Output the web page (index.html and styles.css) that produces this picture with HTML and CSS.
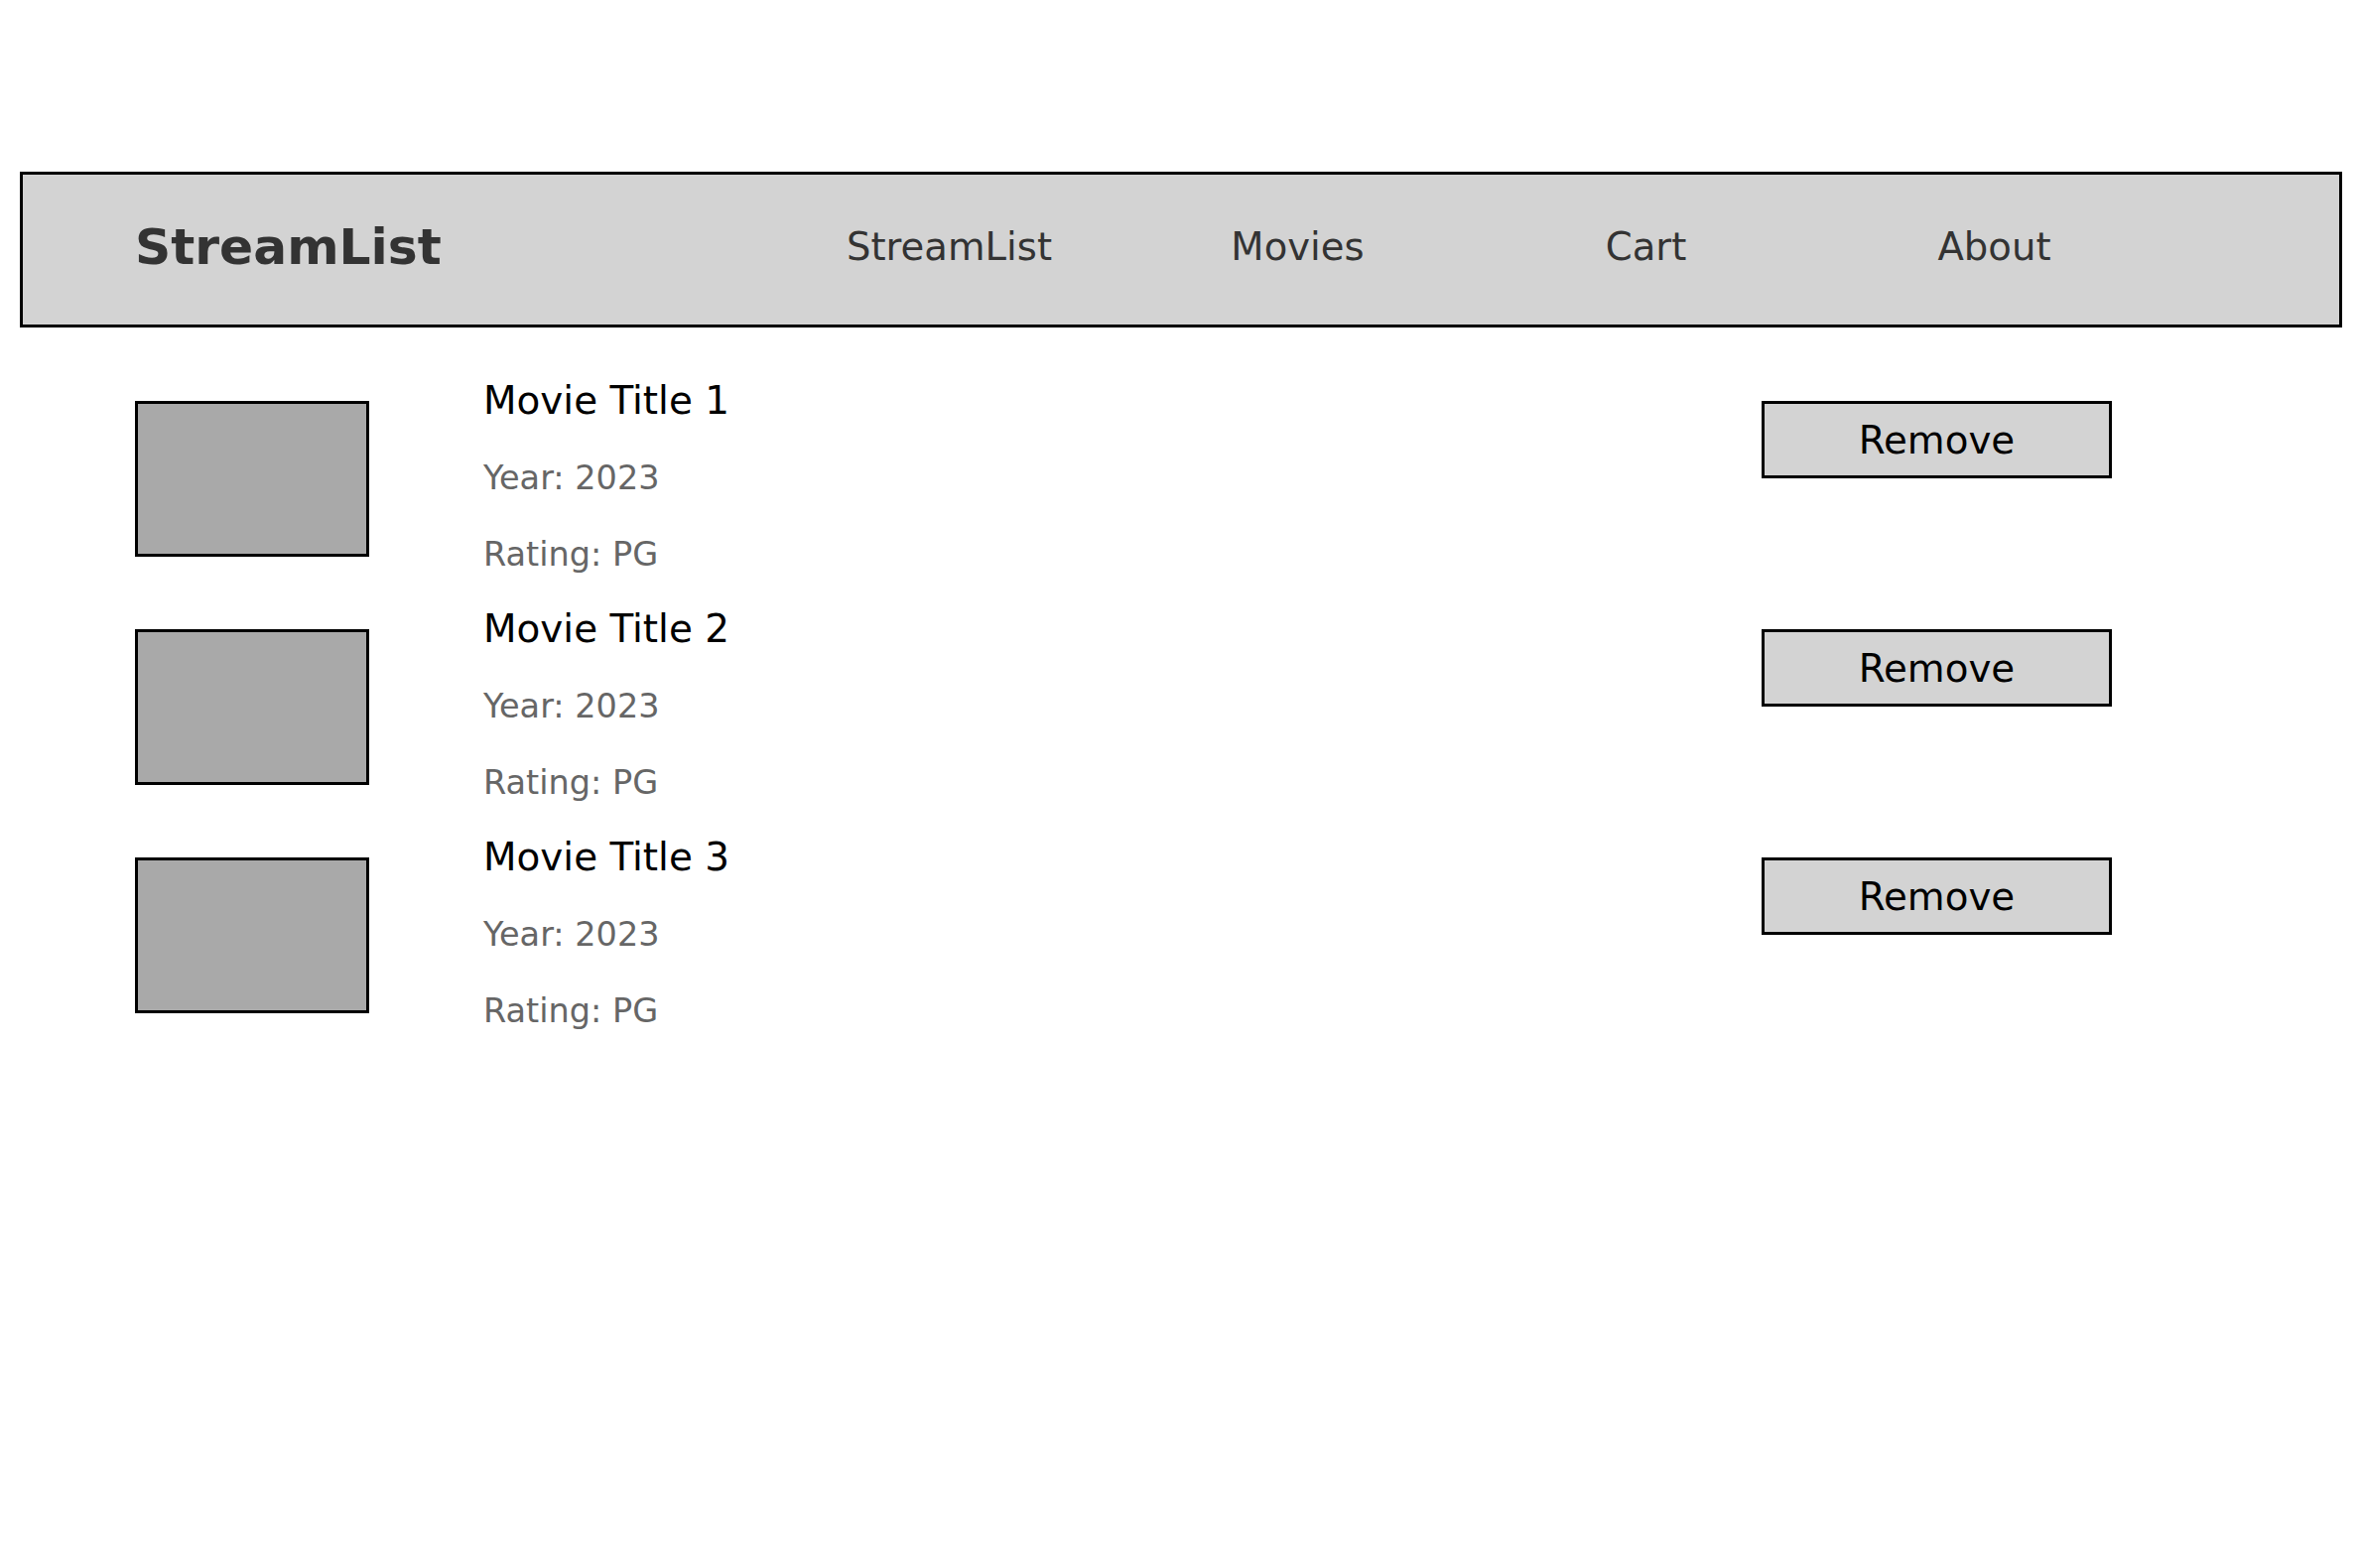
FILE: index.html
```html
<!DOCTYPE html>
<html lang="en">
<head>
<meta charset="utf-8">
<title>StreamList</title>
<link rel="stylesheet" href="styles.css">
</head>
<body>
<div class="page">
  <header class="header">
    <div class="logo">StreamList</div>
    <nav class="nav">
      <a class="nav-link" href="#">StreamList</a>
      <a class="nav-link" href="#">Movies</a>
      <a class="nav-link" href="#">Cart</a>
      <a class="nav-link" href="#">About</a>
    </nav>
  </header>
  <main class="list">
    <div class="item">
      <div class="poster"></div>
      <div class="info">
        <h3 class="title">Movie Title 1</h3>
        <p class="meta meta-year">Year: 2023</p>
        <p class="meta meta-rating">Rating: PG</p>
      </div>
      <button class="remove">Remove</button>
    </div>
    <div class="item">
      <div class="poster"></div>
      <div class="info">
        <h3 class="title">Movie Title 2</h3>
        <p class="meta meta-year">Year: 2023</p>
        <p class="meta meta-rating">Rating: PG</p>
      </div>
      <button class="remove">Remove</button>
    </div>
    <div class="item">
      <div class="poster"></div>
      <div class="info">
        <h3 class="title">Movie Title 3</h3>
        <p class="meta meta-year">Year: 2023</p>
        <p class="meta meta-rating">Rating: PG</p>
      </div>
      <button class="remove">Remove</button>
    </div>
  </main>
</div>
</body>
</html>
```

FILE: styles.css
```css
* {
  box-sizing: border-box;
}

html, body {
  margin: 0;
  padding: 0;
  background: #ffffff;
}

body {
  font-family: "DejaVu Sans", "Liberation Sans", sans-serif;
  color: #000;
}

.page {
  padding: 173px 19px 0 20px;
}

.header {
  display: flex;
  align-items: center;
  height: 157px;
  border: 3px solid #000;
  background: #d3d3d3;
  padding-left: 113px;
  padding-bottom: 5px;
}

.logo {
  font-weight: bold;
  font-size: 50.3px;
  color: #333;
  line-height: 1;
}

.nav {
  margin-left: auto;
  margin-right: 172px;
  display: grid;
  grid-template-columns: repeat(4, 351px);
}

.nav-link {
  text-align: center;
  font-size: 38.6px;
  color: #333;
  text-decoration: none;
  line-height: 1;
}

.list {
  display: flex;
  flex-direction: column;
  gap: 33px;
  margin-top: 51px;
  padding: 0 232px 0 116px;
}

.item {
  display: flex;
  align-items: flex-start;
}

.poster {
  flex: 0 0 236px;
  height: 157px;
  margin-top: 23px;
  background: #a9a9a9;
  border: 3px solid #000;
}

.info {
  flex: 1;
  margin-left: 115px;
}

.title {
  margin: 0 0 36px 0;
  font-weight: normal;
  font-size: 38.9px;
  line-height: 46px;
  color: #000;
}

.meta {
  margin: 0;
  font-size: 33.5px;
  line-height: 38px;
  color: #666;
}

.meta-year {
  margin-bottom: 39px;
}

.remove {
  flex: 0 0 353px;
  height: 78px;
  margin-top: 23px;
  background: #d3d3d3;
  border: 3px solid #000;
  font-family: "DejaVu Sans", "Liberation Sans", sans-serif;
  font-size: 38.8px;
  color: #000;
  padding: 0;
}
```
